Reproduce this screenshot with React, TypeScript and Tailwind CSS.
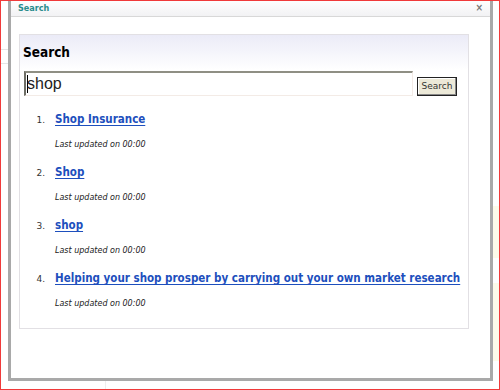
const RESULTS = [
  { n: 1, title: 'Shop Insurance' },
  { n: 2, title: 'Shop' },
  { n: 3, title: 'shop' },
  { n: 4, title: 'Helping your shop prosper by carrying out your own market research' },
]

export default function App() {
  return (
    <div className="w-[500px] h-[390px] border border-[#f03a3a] bg-white overflow-hidden flex font-['DejaVu_Sans_Condensed','DejaVu_Sans',sans-serif]">
      {/* page behind, left edge */}
      <div className="w-[7px] shrink-0 flex flex-col">
        <div className="h-[20px]" />
        <div className="h-[29px] border-b border-[#e6e6e6]" />
        <div className="h-[14px] border-b border-[#e6e6e6]" />
      </div>

      <div className="flex flex-col shrink-0">
        {/* modal */}
        <div className="w-[485px] h-[381px] -mt-[1px] border-[3px] border-t-0 border-[#a9a9a9] bg-white flex flex-col">
          <div className="h-[17px] px-[7px] flex items-center justify-between border-b border-[#d8d8d8] bg-gradient-to-b from-white to-[#f2f2f4]">
            <span className="text-[9px] font-bold text-[#2a8c8c] leading-none">Search</span>
            <span className="text-[10px] font-bold text-[#777] leading-none">×</span>
          </div>

          <div className="pt-[17px] pl-[8px]">
            <div className="w-[450px] h-[295px] border border-[#e2e0e4] bg-gradient-to-b from-[#ebebf7] via-white to-white [background-size:100%_70px] bg-no-repeat">
              <div className="pl-[3px] pt-[8px] text-[13.5px] font-bold text-black leading-[18px]">Search</div>

              <div className="flex items-end pl-[4px] mt-[10px]">
                <div className="w-[389px] h-[25px] border-t-2 border-l-2 border-t-[#8f8f84] border-l-[#6e6e66] border-b border-r border-b-[#f3ebe6] border-r-[#f3ebe6] bg-white flex items-center pl-[1px]">
                  <span className="w-px h-[18px] bg-black" />
                  <span className="text-[16px] text-[#222] leading-none font-['Liberation_Sans',sans-serif] -ml-px">shop</span>
                </div>
                <button className="ml-[4px] w-[40px] h-[19px] border border-[#222] bg-[#ece9d8] text-[9px] text-[#333] leading-none flex items-center justify-center shadow-[inset_-1px_-1px_0_#888,inset_1px_1px_0_#fff] font-['DejaVu_Sans',sans-serif]">
                  Search
                </button>
              </div>

              <ol className="mt-[15px] flex flex-col gap-[13px]">
                {RESULTS.map(r => (
                  <li key={r.n} className="flex">
                    <span className="w-[35px] shrink-0 text-right pr-[10px] text-[9px] text-[#333] leading-[16px] pt-[1px] font-['DejaVu_Sans',sans-serif]">{r.n}.</span>
                    <div className="flex flex-col gap-[12px]">
                      <a href="#" className="text-[11.5px] font-bold text-[#1d4fbd] underline underline-offset-2 leading-[16px] whitespace-nowrap">
                        {r.title}
                      </a>
                      <span className="text-[8px] italic text-[#222] leading-[12px] font-['DejaVu_Sans',sans-serif]">Last updated on 00:00</span>
                    </div>
                  </li>
                ))}
              </ol>
            </div>
          </div>
        </div>
        <div className="h-[8px] border-l border-[#eee] ml-[97px]" />
      </div>

      {/* page behind, right edge */}
      <div className="flex-1 flex flex-col">
        <div className="h-[205px]" />
        <div className="h-[52px] bg-[#fdfbea]" />
        <div className="h-[25px]" />
        <div className="h-[78px] bg-[#fdfbea]" />
      </div>
    </div>
  )
}
